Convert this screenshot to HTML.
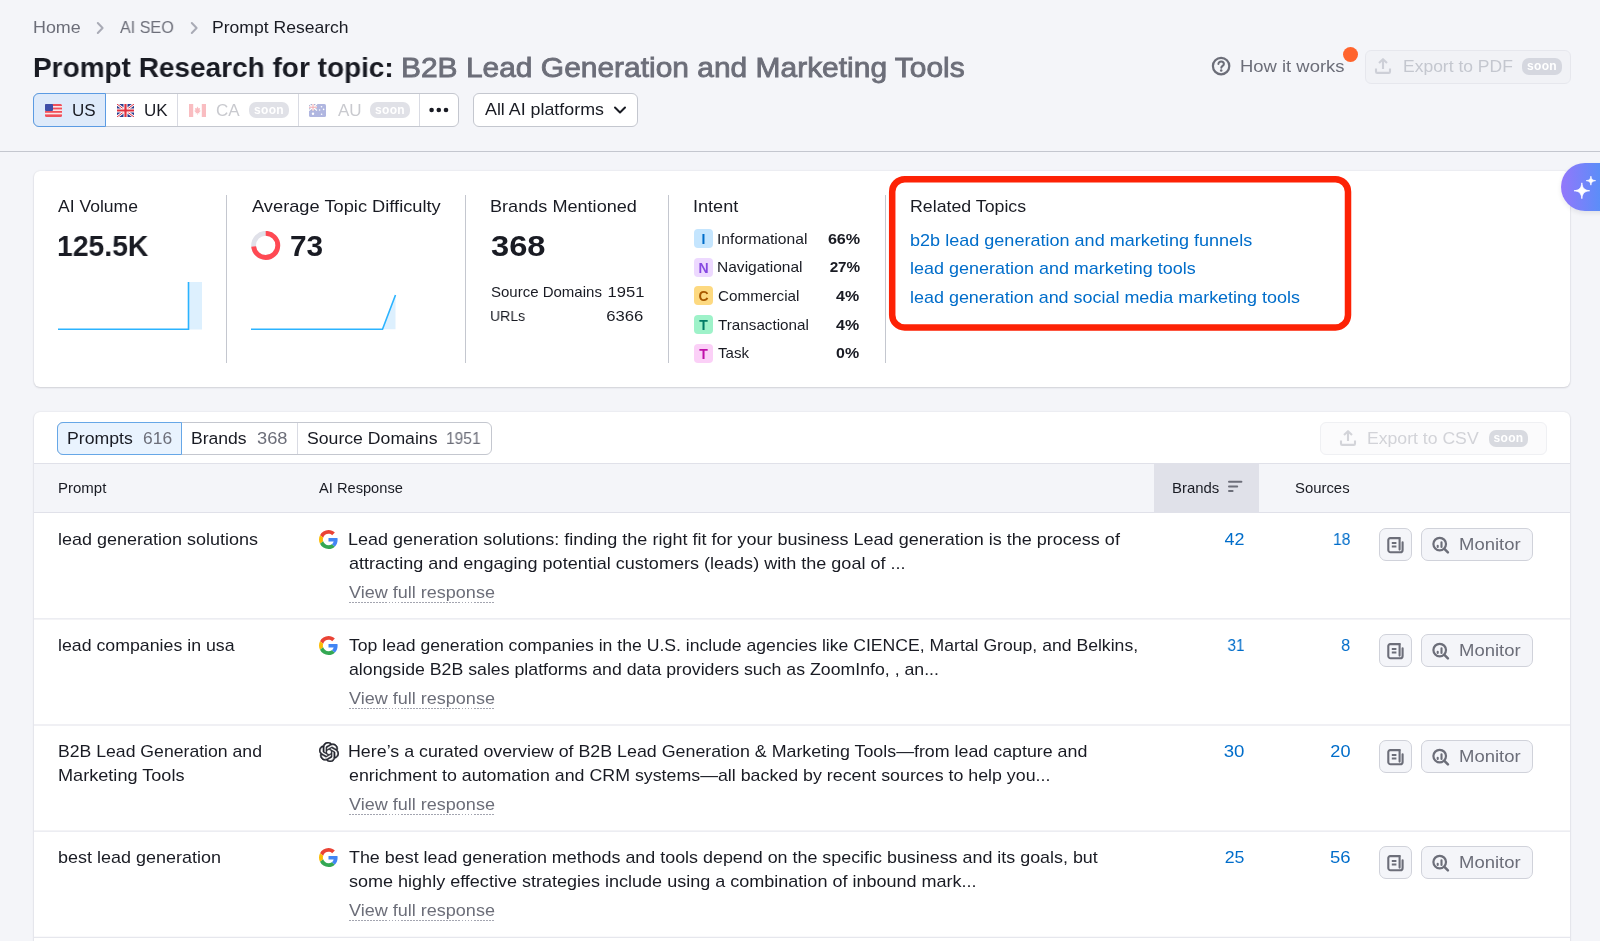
<!DOCTYPE html>
<html lang="en">
<head>
<meta charset="utf-8">
<title>Prompt Research</title>
<style>
*{box-sizing:border-box;margin:0;padding:0}
html,body{width:1600px;height:941px;overflow:hidden}
body{background:#f4f5f9;font-family:"Liberation Sans",sans-serif;color:#191b23;position:relative;font-size:16px}
.abs{position:absolute}
.t{position:absolute;white-space:nowrap;line-height:1;will-change:transform}
a{color:#006dca;text-decoration:none}
/* header */
.crumb{font-size:16.5px;color:#6c6e79}
.title{font-size:28px;font-weight:700;color:#191b23}
.topic{font-size:28px;font-weight:400;color:#6c6e79;-webkit-text-stroke:0.85px #6c6e79}
.hr{position:absolute;left:0;top:151px;width:1600px;height:1px;background:#c4c7cf}
.seg{position:absolute;top:93px;height:34px;background:#fff;border:1px solid #c4c7cf}
.card{position:absolute;left:34px;width:1536px;background:#fff;border-radius:6px;box-shadow:0 0 2px 0 rgba(25,27,35,.11),0 1px 2px 0 rgba(25,27,35,.13)}
.soon{will-change:transform;position:absolute;height:17px;border-radius:7px;background:#dcdde4;color:#fff;font-size:12px;font-weight:700;text-align:center;line-height:17px;letter-spacing:.3px}
.rt{font-size:16.5px}
.vf{color:#6c6e79;padding-bottom:1px;background:repeating-linear-gradient(90deg,#a3a5b0 0,#a3a5b0 1.7px,transparent 1.7px,transparent 2.8px) left bottom/100% 1px no-repeat}
.th{font-size:14.5px}
.btn{position:absolute;height:33px;border:1px solid #d0d2da;border-radius:7px;background:#f4f5f9}
.vline{position:absolute;width:1px;background:#c4c7cf}
</style>
</head>
<body>

<!-- breadcrumbs -->
<span class="t crumb" id="bc1" style="left:33.25px;top:19.00px;font-size:17.00px;transform:scaleX(1.0515);transform-origin:0 0">Home</span>
<svg class="abs" style="left:95px;top:21px" width="10" height="14" viewBox="0 0 10 14"><path d="M2.800 2 L7.600 7 L2.800 12" fill="none" stroke="#a9abb6" stroke-width="2" stroke-linecap="round" stroke-linejoin="round"/></svg>
<span class="t crumb" id="bc2" style="left:119.50px;top:19.00px;font-size:17.00px;transform:scaleX(0.9491);transform-origin:0 0">AI SEO</span>
<svg class="abs" style="left:189px;top:21px" width="10" height="14" viewBox="0 0 10 14"><path d="M2.800 2 L7.600 7 L2.800 12" fill="none" stroke="#a9abb6" stroke-width="2" stroke-linecap="round" stroke-linejoin="round"/></svg>
<span class="t crumb" id="bc3" style="left:212.25px;top:19.00px;color:#191b23;font-size:17.00px;transform:scaleX(1.0327);transform-origin:0 0">Prompt Research</span>

<!-- title -->
<span class="t title" id="ttl" style="left:33.00px;top:53.01px;font-size:28.30px;transform:scaleX(0.9890);transform-origin:0 0">Prompt Research for topic:</span>
<span class="t topic" id="tpc" style="left:400.50px;top:53.01px;font-size:28.30px;transform:scaleX(1.0581);transform-origin:0 0">B2B Lead Generation and Marketing Tools</span>


<!-- country segmented control -->
<div class="seg" style="left:33px;width:426px;border-radius:6px"></div>
<div class="abs" style="left:33px;top:93px;width:73px;height:34px;background:#deeafa;border:1px solid #5b9be3;border-radius:6px 0 0 6px"></div>
<div class="vline" style="left:177px;top:94px;height:32px;background:#d9dbe3"></div>
<div class="vline" style="left:298px;top:94px;height:32px;background:#d9dbe3"></div>
<div class="vline" style="left:419px;top:94px;height:32px;background:#d9dbe3"></div>
<!-- flags -->
<svg class="abs" style="left:45px;top:104px" width="17" height="13" viewBox="0 0 17 13"><rect width="17" height="13" rx="1.5" fill="#f0505a"/><g fill="#fbe4e6"><rect y="2" width="17" height="1.6"/><rect y="5.4" width="17" height="1.6"/><rect y="8.8" width="17" height="1.6"/></g><rect width="8" height="7" rx="1" fill="#3f4fa8"/></svg>
<svg class="abs" style="left:117px;top:104px" width="17" height="13" viewBox="0 0 17 13"><rect width="17" height="13" rx="1.5" fill="#2a3a8c"/><path d="M0 0L17 13M17 0L0 13" stroke="#fff" stroke-width="2.6"/><path d="M0 0L17 13M17 0L0 13" stroke="#e0303f" stroke-width="1"/><path d="M8.5 0V13M0 6.5H17" stroke="#fff" stroke-width="4"/><path d="M8.5 0V13M0 6.5H17" stroke="#e0303f" stroke-width="2.2"/></svg>
<svg class="abs" style="left:189px;top:104px;opacity:.35" width="17" height="13" viewBox="0 0 17 13"><rect width="17" height="13" rx="1.5" fill="#fff"/><rect width="4.2" height="13" fill="#ef4550"/><rect x="12.8" width="4.2" height="13" fill="#ef4550"/><path d="M8.5 2.6l1 2 1.6-.6-.6 2.6 1.4.2-1.8 1.8.3.8-1.6-.3v1.6h-.6V9.1l-1.6.3.3-.8-1.8-1.8 1.4-.2-.6-2.6 1.6.6z" fill="#ef4550"/></svg>
<svg class="abs" style="left:309px;top:104px;opacity:.4" width="17" height="13" viewBox="0 0 17 13"><rect width="17" height="13" rx="1.5" fill="#3b4cb3"/><rect width="8" height="6.5" fill="#2a3a8c"/><path d="M0 0L8 6.5M8 0L0 6.5" stroke="#fff" stroke-width="1.3"/><path d="M4 0V6.5M0 3.25H8" stroke="#fff" stroke-width="2"/><path d="M4 0V6.5M0 3.25H8" stroke="#e0303f" stroke-width="1"/><g fill="#fff"><circle cx="4" cy="9.8" r="1.2"/><circle cx="12.5" cy="2.8" r=".8"/><circle cx="14.6" cy="5.4" r=".8"/><circle cx="10.6" cy="6" r=".8"/><circle cx="12.6" cy="10.2" r=".8"/></g></svg>
<span class="t" id="cUS" style="left:72.00px;top:102.01px;font-size:17.00px;transform:scaleX(1.0000);transform-origin:0 0">US</span>
<span class="t" id="cUK" style="left:144.00px;top:102.01px;font-size:17.00px;transform:scaleX(0.9836);transform-origin:0 0">UK</span>
<span class="t" id="cCA" style="left:216.00px;top:102.01px;color:#c9cacf;font-size:17.00px;transform:scaleX(0.9835);transform-origin:0 0">CA</span>
<span class="t" id="cAU" style="left:338.00px;top:102.01px;color:#c9cacf;font-size:17.00px;transform:scaleX(1.0000);transform-origin:0 0">AU</span>
<div class="soon" style="left:249px;top:102px;width:40px;height:16px;line-height:16px;background:#e0e1e7">soon</div>
<div class="soon" style="left:370px;top:102px;width:40px;height:16px;line-height:16px;background:#e0e1e7">soon</div>
<svg class="abs" style="left:429px;top:107px" width="20" height="6" viewBox="0 0 20 6"><circle cx="2.6" cy="3" r="2.3" fill="#191b23"/><circle cx="9.8" cy="3" r="2.3" fill="#191b23"/><circle cx="17" cy="3" r="2.3" fill="#191b23"/></svg>
<!-- platform select -->
<div class="seg" style="left:473px;width:165px;border-radius:6px"></div>
<span class="t" id="plat" style="left:484.50px;top:101.01px;font-size:17.00px;transform:scaleX(1.0487);transform-origin:0 0">All AI platforms</span>
<svg class="abs" style="left:613px;top:105px" width="14" height="10" viewBox="0 0 14 10"><path d="M2 2.5 L7 7.5 L12 2.5" fill="none" stroke="#191b23" stroke-width="2" stroke-linecap="round" stroke-linejoin="round"/></svg>

<!-- how it works -->
<svg class="abs" style="left:1211px;top:56px" width="20" height="20" viewBox="0 0 20 20"><circle cx="10.100" cy="10.100" r="8.200" fill="none" stroke="#6c6e79" stroke-width="2.200"/><path d="M7.400 8.100c0-1.600 1.200-2.700 2.800-2.700s2.700 1.100 2.700 2.500c0 1.900-2.600 2-2.600 3.900" fill="none" stroke="#6c6e79" stroke-width="2" stroke-linecap="round"/><circle cx="10.200" cy="14.500" r="1.250" fill="#6c6e79"/></svg>
<span class="t" id="hiw" style="left:1240.3px;top:58.00px;color:#6c6e79;transform:scaleX(1.084);transform-origin:0 0;font-size:17.00px">How it works</span>
<div class="abs" style="left:1343px;top:47px;width:15px;height:15px;border-radius:8px;background:#ff642d"></div>
<!-- export pdf -->
<div class="abs" style="left:1365px;top:50px;width:206px;height:34px;border:1px solid #e6e7ed;border-radius:6px;background:#f1f2f6"></div>
<svg class="abs" style="left:1374px;top:57px" width="18" height="18" viewBox="0 0 18 18"><path d="M9 12V2.5M5 6L9 2.2 13 6M2 11.5v3.2c0 .7.5 1.2 1.2 1.2h11.6c.7 0 1.2-.5 1.2-1.2v-3.2" fill="none" stroke="#cdcfd7" stroke-width="2.1" stroke-linecap="butt" stroke-linejoin="round"/></svg>
<span class="t" id="pdf" style="left:1402.50px;top:58.00px;color:#c4c7cf;font-size:17.00px;transform:scaleX(1.0286);transform-origin:0 0">Export to PDF</span>
<div class="soon" style="left:1522px;top:58px;width:40px;background:#d5d7df">soon</div>

<div class="hr"></div>

<!-- summary card -->
<div class="card" style="top:171px;height:216px"></div>
<span class="t" id="h1" style="left:58.00px;top:198.00px;font-size:17.00px;transform:scaleX(1.0325);transform-origin:0 0">AI Volume</span>
<span class="t" id="v1" style="left:57.00px;top:231.01px;font-weight:700;font-size:29.50px;transform:scaleX(0.9604);transform-origin:0 0">125.5K</span>
<svg class="abs" style="left:58px;top:280px" width="145" height="52" viewBox="0 0 145 52"><rect x="130.5" y="2" width="13.5" height="47.5" fill="#ddf0fe"/><path d="M0 49.2H130.5V2" fill="none" stroke="#2bb3ff" stroke-width="1.6"/></svg>
<div class="vline" style="left:226px;top:195px;height:168px"></div>

<span class="t" id="h2" style="left:252.00px;top:198.00px;font-size:17.00px;transform:scaleX(1.0739);transform-origin:0 0">Average Topic Difficulty</span>
<svg class="abs" style="left:251px;top:231px" width="30" height="29" viewBox="0 0 30 29"><circle cx="14.7" cy="14.4" r="12.1" fill="none" stroke="#e0e1e9" stroke-width="4.8"/><circle cx="14.7" cy="14.4" r="12.1" fill="none" stroke="#ff4953" stroke-width="4.8" stroke-dasharray="55.5 76.03" transform="rotate(-90 14.7 14.4)"/></svg>
<span class="t" id="v2" style="left:289.75px;top:231.01px;font-weight:700;font-size:29.50px;transform:scaleX(1.0101);transform-origin:0 0">73</span>
<svg class="abs" style="left:251px;top:280px" width="146" height="52" viewBox="0 0 146 52"><path d="M131.5 49.2L144.5 15V49.2Z" fill="#ddf0fe"/><path d="M0 49.2H131.5L144.5 15" fill="none" stroke="#2bb3ff" stroke-width="1.6"/></svg>
<div class="vline" style="left:465px;top:195px;height:168px"></div>

<span class="t" id="h3" style="left:490.00px;top:198.00px;font-size:17.00px;transform:scaleX(1.0647);transform-origin:0 0">Brands Mentioned</span>
<span class="t" id="v3" style="left:491.00px;top:231.01px;font-weight:700;font-size:29.50px;transform:scaleX(1.1071);transform-origin:0 0">368</span>
<span class="t" id="sd" style="left:491.00px;top:284.01px;font-size:15.00px;transform:scaleX(0.9982);transform-origin:0 0">Source Domains</span>
<span class="t" id="sdv" style="right:956.08px;top:284.01px;font-size:15.00px;transform:scaleX(1.1033);transform-origin:100% 0">1951</span>
<span class="t" id="ur" style="left:490.00px;top:308.01px;font-size:15.00px;transform:scaleX(0.9353);transform-origin:0 0">URLs</span>
<span class="t" id="urv" style="right:956.41px;top:308.01px;font-size:15.00px;transform:scaleX(1.1118);transform-origin:100% 0">6366</span>
<div class="vline" style="left:668px;top:195px;height:168px"></div>

<span class="t" id="h4" style="left:693.00px;top:198.00px;font-size:17.00px;transform:scaleX(1.0628);transform-origin:0 0">Intent</span>
<div class="abs" style="left:694px;top:228.8px;width:19px;height:19px;border-radius:4px;background:#c4e5fe;color:#006dca;font-size:14px;font-weight:700;text-align:center;line-height:21px;will-change:transform">I</div>
<span class="t" id="in0" style="left:717.30px;top:232.00px;font-size:14.60px;transform:scaleX(1.0718);transform-origin:0 0">Informational</span>
<span class="t" id="ip0" style="right:740.10px;top:232.00px;font-weight:700;font-size:14.60px;transform:scaleX(1.1064);transform-origin:100% 0">66%</span>
<div class="abs" style="left:694px;top:257.6px;width:19px;height:19px;border-radius:4px;background:#edd9ff;color:#8649e1;font-size:14px;font-weight:700;text-align:center;line-height:21px;will-change:transform">N</div>
<span class="t" id="in1" style="left:717.30px;top:260.01px;font-size:14.60px;transform:scaleX(1.0648);transform-origin:0 0">Navigational</span>
<span class="t" id="ip1" style="right:740.10px;top:260.01px;font-weight:700;font-size:14.60px;transform:scaleX(1.0470);transform-origin:100% 0">27%</span>
<div class="abs" style="left:694px;top:286.4px;width:19px;height:19px;border-radius:4px;background:#fdd980;color:#a75800;font-size:14px;font-weight:700;text-align:center;line-height:21px;will-change:transform">C</div>
<span class="t" id="in2" style="left:718.30px;top:289.00px;font-size:14.60px;transform:scaleX(1.0460);transform-origin:0 0">Commercial</span>
<span class="t" id="ip2" style="right:740.60px;top:289.00px;font-weight:700;font-size:14.60px;transform:scaleX(1.0952);transform-origin:100% 0">4%</span>
<div class="abs" style="left:694px;top:315.2px;width:19px;height:19px;border-radius:4px;background:#9ef2c9;color:#007c65;font-size:14px;font-weight:700;text-align:center;line-height:21px;will-change:transform">T</div>
<span class="t" id="in3" style="left:718.30px;top:318.00px;font-size:14.60px;transform:scaleX(1.0439);transform-origin:0 0">Transactional</span>
<span class="t" id="ip3" style="right:740.60px;top:318.00px;font-weight:700;font-size:14.60px;transform:scaleX(1.0952);transform-origin:100% 0">4%</span>
<div class="abs" style="left:694px;top:344.0px;width:19px;height:19px;border-radius:4px;background:#fbd0f7;color:#c010a9;font-size:14px;font-weight:700;text-align:center;line-height:21px;will-change:transform">T</div>
<span class="t" id="in4" style="left:718.30px;top:346.01px;font-size:14.60px;transform:scaleX(1.0333);transform-origin:0 0">Task</span>
<span class="t" id="ip4" style="right:740.60px;top:346.01px;font-weight:700;font-size:14.60px;transform:scaleX(1.0952);transform-origin:100% 0">0%</span>

<div class="vline" style="left:885px;top:195px;height:168px"></div>

<svg class="abs" style="left:885px;top:172px" width="472" height="164" viewBox="0 0 472 164"><rect x="7.200" y="7.250" width="455.800" height="148.200" rx="12.500" ry="12.500" fill="none" stroke="#fd2205" stroke-width="6.500"/></svg>
<span class="t" id="h5" style="left:910.20px;top:198.00px;font-size:17.00px;transform:scaleX(1.0438);transform-origin:0 0">Related Topics</span>
<a class="t" id="r1" style="left:909.60px;top:232.00px;font-size:17.00px;transform:scaleX(1.0617);transform-origin:0 0">b2b lead generation and marketing funnels</a>
<a class="t" id="r2" style="left:909.60px;top:260.00px;font-size:17.00px;transform:scaleX(1.0571);transform-origin:0 0">lead generation and marketing tools</a>
<a class="t" id="r3" style="left:909.60px;top:289.00px;font-size:17.00px;transform:scaleX(1.0552);transform-origin:0 0">lead generation and social media marketing tools</a>

<!-- AI fab -->
<div class="abs" style="left:1561px;top:163px;width:90px;height:48px;border-radius:24px;background:linear-gradient(90deg,#9377fb 0px,#5a8ef8 40px);box-shadow:0 2px 5px rgba(25,27,35,.09)"></div>
<svg class="abs" style="left:1561px;top:163px" width="39" height="48" viewBox="0 0 39 48"><path d="M20.85 19.85C21.47 25.38 23.19 27.12 28.65 27.75C23.19 28.38 21.47 30.12 20.85 35.65C20.23 30.12 18.51 28.38 13.05 27.75C18.51 27.12 20.23 25.38 20.85 19.85Z" fill="#fff" stroke="#fff" stroke-width=".8" stroke-linejoin="round"/><path d="M29.90 13.15C30.28 16.30 31.31 17.29 34.60 17.65C31.31 18.01 30.28 19.00 29.90 22.15C29.52 19.00 28.49 18.01 25.20 17.65C28.49 17.29 29.52 16.30 29.90 13.15Z" fill="#fff" stroke="#fff" stroke-width=".7" stroke-linejoin="round"/></svg>

<!-- table card -->
<div class="card" style="top:412px;height:540px;border-radius:6px 6px 0 0"></div>
<div class="abs" style="left:57px;top:422px;width:435px;height:33px;border:1px solid #c4c7cf;border-radius:6px;background:#fff"></div>
<div class="abs" style="left:57px;top:422px;width:125px;height:33px;border:1px solid #66a7e7;border-radius:6px 0 0 6px;background:#e9f3fe"></div>
<div class="vline" style="left:297px;top:423px;height:31px;background:#d9dbe3"></div>
<span class="t" id="t1" style="left:67.20px;top:430.01px;font-size:16.30px;transform:scaleX(1.0859);transform-origin:0 0">Prompts</span>
<span class="t" id="t1n" style="left:143.00px;top:430.01px;color:#6c6e79;font-size:16.30px;transform:scaleX(1.0701);transform-origin:0 0">616</span>
<span class="t" id="t2" style="left:190.80px;top:430.01px;font-size:16.30px;transform:scaleX(1.0788);transform-origin:0 0">Brands</span>
<span class="t" id="t2n" style="left:256.50px;top:430.01px;color:#6c6e79;font-size:16.30px;transform:scaleX(1.1221);transform-origin:0 0">368</span>
<span class="t" id="t3" style="left:306.50px;top:430.01px;font-size:16.30px;transform:scaleX(1.0843);transform-origin:0 0">Source Domains</span>
<span class="t" id="t3n" style="left:446.40px;top:430.01px;color:#6c6e79;font-size:16.30px;transform:scaleX(0.9556);transform-origin:0 0">1951</span>

<div class="abs" style="left:1320px;top:422px;width:227px;height:33px;border:1px solid #eff0f3;border-radius:6px;background:#fbfbfc"></div>
<svg class="abs" style="left:1339px;top:429px" width="18" height="18" viewBox="0 0 18 18"><path d="M9 12V2.500M5 6L9 2.200 13 6M2 11.500v3.200c0 .700.500 1.200 1.200 1.200h11.600c.700 0 1.200-.500 1.200-1.200v-3.200" fill="none" stroke="#d3d4d9" stroke-width="2.1" stroke-linecap="butt" stroke-linejoin="round"/></svg>
<span class="t" id="csv" style="left:1366.60px;top:430.01px;color:#d2d3d8;font-size:16.30px;transform:scaleX(1.0821);transform-origin:0 0">Export to CSV</span>
<div class="soon" style="left:1489px;top:429.5px;width:39px;background:#d8dae0">soon</div>

<!-- table head -->
<div class="abs" style="left:34px;top:463px;width:1536px;height:50px;background:#f4f5f9;border-top:1px solid #e0e1e9;border-bottom:1px solid #e0e1e9"></div>
<div class="abs" style="left:1154px;top:464px;width:105px;height:49px;background:#e0e1e9"></div>
<span class="t th" id="th1" style="left:57.50px;top:481.01px;font-size:14.30px;transform:scaleX(1.0489);transform-origin:0 0">Prompt</span>
<span class="t th" id="th2" style="left:319.00px;top:481.01px;font-size:14.30px;transform:scaleX(1.0244);transform-origin:0 0">AI Response</span>
<span class="t th" id="th3" style="left:1172.20px;top:481.01px;font-size:14.30px;transform:scaleX(1.0444);transform-origin:0 0">Brands</span>
<svg class="abs" style="left:1228px;top:480px" width="15" height="13" viewBox="0 0 15 13"><path d="M1 1.700h12.400M1 6.400h8.200M1 11.100h3.600" stroke="#6c6e79" stroke-width="2" stroke-linecap="round"/></svg>
<span class="t th" id="th4" style="left:1294.90px;top:481.01px;font-size:14.30px;transform:scaleX(1.0406);transform-origin:0 0">Sources</span>
<!-- row 1 -->
<span class="t rt" id="p0a" style="left:57.50px;top:532.01px;font-size:16.60px;transform:scaleX(1.0844);transform-origin:0 0">lead generation solutions</span>
<svg class="abs" style="left:318.700px;top:530.3px" width="19" height="19" viewBox="0 0 48 48"><path fill="#EA4335" d="M24 9.5c3.54 0 6.71 1.220 9.210 3.600l6.850-6.850C35.900 2.380 30.470 0 24 0 14.620 0 6.510 5.380 2.560 13.220l7.980 6.190C12.430 13.720 17.740 9.500 24 9.500z"/><path fill="#4285F4" d="M46.980 24.550c0-1.570-.150-3.090-.380-4.550H24v9.020h12.940c-.580 2.960-2.260 5.480-4.780 7.180l7.730 6c4.510-4.180 7.090-10.360 7.090-17.650z"/><path fill="#FBBC05" d="M10.530 28.590c-.480-1.450-.760-2.990-.760-4.590s.270-3.140.760-4.590l-7.980-6.190C.920 16.460 0 20.120 0 24c0 3.880.920 7.540 2.560 10.780l7.970-6.190z"/><path fill="#34A853" d="M24 48c6.480 0 11.930-2.130 15.890-5.810l-7.730-6c-2.150 1.450-4.920 2.300-8.160 2.300-6.260 0-11.570-4.220-13.470-9.910l-7.980 6.190C6.510 42.620 14.620 48 24 48z"/></svg>
<span class="t rt" id="a0a" style="left:347.50px;top:532.01px;font-size:16.60px;transform:scaleX(1.0853);transform-origin:0 0">Lead generation solutions: finding the right fit for your business Lead generation is the process of</span>
<span class="t rt" id="a0b" style="left:348.50px;top:556.01px;font-size:16.60px;transform:scaleX(1.0871);transform-origin:0 0">attracting and engaging potential customers (leads) with the goal of ...</span>
<span class="t rt vf" id="vf0" style="left:348.50px;top:585.01px;font-size:16.60px;transform:scaleX(1.0860);transform-origin:0 0">View full response</span>
<a class="t rt" id="b0" style="right:355.40px;top:532.01px;font-size:16.60px;transform:scaleX(1.0796);transform-origin:100% 0">42</a>
<a class="t rt" id="s0" style="right:249.80px;top:532.01px;font-size:16.60px;transform:scaleX(0.9490);transform-origin:100% 0">18</a>
<div class="btn" style="left:1379px;top:528px;width:33px"></div>
<svg class="abs" style="left:1386px;top:535.5px" width="19" height="19" viewBox="0 0 19 19"><path d="M13.6 2.1H4.200A1.900 1.900 0 0 0 2.300 4V14a2.300 2.300 0 0 0 2.300 2.300H14.200a2.400 2.400 0 0 0 2.400-2.400V6.300" fill="none" stroke="#6c6e79" stroke-width="2.1" stroke-linecap="round" stroke-linejoin="round"/><path d="M13.6 2.100V13.600" fill="none" stroke="#6c6e79" stroke-width="2.1" stroke-linecap="round"/><path d="M5.800 7.100h4.600M5.800 10.600h4.600" stroke="#6c6e79" stroke-width="2" stroke-linecap="butt"/></svg>
<div class="btn" style="left:1421px;top:528px;width:112px"></div>
<svg class="abs" style="left:1431px;top:535.5px" width="19" height="19" viewBox="0 0 19 19"><circle cx="8.700" cy="8.100" r="6.300" fill="none" stroke="#6c6e79" stroke-width="2.200"/><path d="M13.400 12.900L16.900 16.400" stroke="#6c6e79" stroke-width="2.500" stroke-linecap="round"/><path d="M6.700 9.700v1.300M10.500 6.300v4.700" stroke="#6c6e79" stroke-width="2.100" stroke-linecap="round"/></svg>
<span class="t" id="m0" style="left:1458.90px;top:536.00px;color:#6c6e79;font-size:17.00px;transform:scaleX(1.0866);transform-origin:0 0">Monitor</span>
<div class="abs" style="left:34px;top:618px;width:1536px;height:2px;background:linear-gradient(180deg,#ecedf2 0,#ecedf2 1px,#f3f3f6 1px,#f3f3f6 2px)"></div>
<!-- row 2 -->
<span class="t rt" id="p1a" style="left:57.50px;top:638.01px;font-size:16.60px;transform:scaleX(1.0693);transform-origin:0 0">lead companies in usa</span>
<svg class="abs" style="left:318.700px;top:636.3px" width="19" height="19" viewBox="0 0 48 48"><path fill="#EA4335" d="M24 9.5c3.54 0 6.71 1.220 9.210 3.600l6.850-6.850C35.900 2.380 30.470 0 24 0 14.620 0 6.510 5.380 2.560 13.220l7.980 6.190C12.430 13.720 17.740 9.500 24 9.500z"/><path fill="#4285F4" d="M46.980 24.550c0-1.570-.150-3.090-.380-4.550H24v9.020h12.940c-.580 2.960-2.260 5.480-4.780 7.180l7.730 6c4.510-4.180 7.090-10.360 7.090-17.650z"/><path fill="#FBBC05" d="M10.530 28.590c-.480-1.450-.760-2.990-.760-4.590s.270-3.140.760-4.590l-7.980-6.190C.920 16.460 0 20.120 0 24c0 3.880.920 7.540 2.560 10.780l7.970-6.190z"/><path fill="#34A853" d="M24 48c6.480 0 11.930-2.130 15.890-5.810l-7.730-6c-2.150 1.450-4.920 2.300-8.160 2.300-6.260 0-11.570-4.220-13.470-9.910l-7.980 6.190C6.510 42.620 14.620 48 24 48z"/></svg>
<span class="t rt" id="a1a" style="left:348.50px;top:638.01px;font-size:16.60px;transform:scaleX(1.0614);transform-origin:0 0">Top lead generation companies in the U.S. include agencies like CIENCE, Martal Group, and Belkins,</span>
<span class="t rt" id="a1b" style="left:348.50px;top:662.01px;font-size:16.60px;transform:scaleX(1.0678);transform-origin:0 0">alongside B2B sales platforms and data providers such as ZoomInfo, , an...</span>
<span class="t rt vf" id="vf1" style="left:348.50px;top:691.01px;font-size:16.60px;transform:scaleX(1.0860);transform-origin:0 0">View full response</span>
<a class="t rt" id="b1" style="right:355.20px;top:638.01px;font-size:16.60px;transform:scaleX(0.9200);transform-origin:100% 0">31</a>
<a class="t rt" id="s1" style="right:249.80px;top:638.01px;font-size:16.60px;transform:scaleX(0.9911);transform-origin:100% 0">8</a>
<div class="btn" style="left:1379px;top:634px;width:33px"></div>
<svg class="abs" style="left:1386px;top:641.5px" width="19" height="19" viewBox="0 0 19 19"><path d="M13.6 2.1H4.200A1.900 1.900 0 0 0 2.300 4V14a2.300 2.300 0 0 0 2.300 2.300H14.200a2.400 2.400 0 0 0 2.400-2.400V6.300" fill="none" stroke="#6c6e79" stroke-width="2.1" stroke-linecap="round" stroke-linejoin="round"/><path d="M13.6 2.100V13.600" fill="none" stroke="#6c6e79" stroke-width="2.1" stroke-linecap="round"/><path d="M5.800 7.100h4.600M5.800 10.600h4.600" stroke="#6c6e79" stroke-width="2" stroke-linecap="butt"/></svg>
<div class="btn" style="left:1421px;top:634px;width:112px"></div>
<svg class="abs" style="left:1431px;top:641.5px" width="19" height="19" viewBox="0 0 19 19"><circle cx="8.700" cy="8.100" r="6.300" fill="none" stroke="#6c6e79" stroke-width="2.200"/><path d="M13.400 12.900L16.900 16.400" stroke="#6c6e79" stroke-width="2.500" stroke-linecap="round"/><path d="M6.700 9.700v1.300M10.500 6.300v4.700" stroke="#6c6e79" stroke-width="2.100" stroke-linecap="round"/></svg>
<span class="t" id="m1" style="left:1458.90px;top:642.00px;color:#6c6e79;font-size:17.00px;transform:scaleX(1.0866);transform-origin:0 0">Monitor</span>
<div class="abs" style="left:34px;top:724px;width:1536px;height:2px;background:linear-gradient(180deg,#f0f0f4 0,#f0f0f4 1px,#f0f0f4 1px,#f0f0f4 2px)"></div>
<!-- row 3 -->
<span class="t rt" id="p2a" style="left:57.50px;top:744.01px;font-size:16.60px;transform:scaleX(1.0628);transform-origin:0 0">B2B Lead Generation and</span>
<span class="t rt" id="p2b" style="left:57.50px;top:768.01px;font-size:16.60px;transform:scaleX(1.0915);transform-origin:0 0">Marketing Tools</span>
<svg class="abs" style="left:318.700px;top:742.3px" width="20" height="20" viewBox="0 0 24 24"><path fill="#23252e" stroke="#23252e" stroke-width=".55" d="M22.282 9.821a5.985 5.985 0 0 0-.516-4.910 6.046 6.046 0 0 0-6.510-2.900A6.065 6.065 0 0 0 4.981 4.180a5.985 5.985 0 0 0-3.998 2.900 6.046 6.046 0 0 0 .743 7.097 5.980 5.980 0 0 0 .510 4.911 6.051 6.051 0 0 0 6.515 2.900A5.985 5.985 0 0 0 13.260 24a6.056 6.056 0 0 0 5.772-4.206 5.990 5.990 0 0 0 3.997-2.900 6.056 6.056 0 0 0-.747-7.073zM13.260 22.430a4.476 4.476 0 0 1-2.876-1.040l.141-.081 4.779-2.758a.795.795 0 0 0 .392-.681v-6.737l2.020 1.168a.071.071 0 0 1 .038.052v5.583a4.504 4.504 0 0 1-4.494 4.494zM3.600 18.304a4.470 4.470 0 0 1-.535-3.014l.142.085 4.783 2.759a.771.771 0 0 0 .780 0l5.843-3.369v2.332a.080.080 0 0 1-.033.062L9.740 19.950a4.500 4.500 0 0 1-6.140-1.646zM2.340 7.896a4.485 4.485 0 0 1 2.366-1.973V11.600a.766.766 0 0 0 .388.676l5.815 3.355-2.020 1.168a.076.076 0 0 1-.071 0l-4.830-2.786A4.504 4.504 0 0 1 2.340 7.872zm16.597 3.855l-5.833-3.387L15.119 7.200a.076.076 0 0 1 .071 0l4.830 2.791a4.494 4.494 0 0 1-.676 8.105v-5.678a.790.790 0 0 0-.407-.667zm2.010-3.023l-.141-.085-4.774-2.782a.776.776 0 0 0-.785 0L9.409 9.230V6.897a.066.066 0 0 1 .028-.061l4.830-2.787a4.500 4.500 0 0 1 6.680 4.660zm-12.640 4.135l-2.020-1.164a.080.080 0 0 1-.038-.057V6.075a4.500 4.500 0 0 1 7.375-3.453l-.142.080L8.704 5.460a.795.795 0 0 0-.393.681zm1.097-2.365l2.602-1.500 2.607 1.500v2.999l-2.597 1.500-2.607-1.500z"/></svg>
<span class="t rt" id="a2a" style="left:347.50px;top:744.01px;font-size:16.60px;transform:scaleX(1.0740);transform-origin:0 0">Here’s a curated overview of B2B Lead Generation &amp; Marketing Tools—from lead capture and</span>
<span class="t rt" id="a2b" style="left:348.50px;top:768.01px;font-size:16.60px;transform:scaleX(1.0726);transform-origin:0 0">enrichment to automation and CRM systems—all backed by recent sources to help you...</span>
<span class="t rt vf" id="vf2" style="left:348.50px;top:797.01px;font-size:16.60px;transform:scaleX(1.0860);transform-origin:0 0">View full response</span>
<a class="t rt" id="b2" style="right:355.40px;top:744.01px;font-size:16.60px;transform:scaleX(1.1237);transform-origin:100% 0">30</a>
<a class="t rt" id="s2" style="right:250.00px;top:744.01px;font-size:16.60px;transform:scaleX(1.0912);transform-origin:100% 0">20</a>
<div class="btn" style="left:1379px;top:740px;width:33px"></div>
<svg class="abs" style="left:1386px;top:747.5px" width="19" height="19" viewBox="0 0 19 19"><path d="M13.6 2.1H4.200A1.900 1.900 0 0 0 2.300 4V14a2.300 2.300 0 0 0 2.300 2.300H14.200a2.400 2.400 0 0 0 2.400-2.400V6.300" fill="none" stroke="#6c6e79" stroke-width="2.1" stroke-linecap="round" stroke-linejoin="round"/><path d="M13.6 2.100V13.600" fill="none" stroke="#6c6e79" stroke-width="2.1" stroke-linecap="round"/><path d="M5.800 7.100h4.600M5.800 10.600h4.600" stroke="#6c6e79" stroke-width="2" stroke-linecap="butt"/></svg>
<div class="btn" style="left:1421px;top:740px;width:112px"></div>
<svg class="abs" style="left:1431px;top:747.5px" width="19" height="19" viewBox="0 0 19 19"><circle cx="8.700" cy="8.100" r="6.300" fill="none" stroke="#6c6e79" stroke-width="2.200"/><path d="M13.400 12.900L16.900 16.400" stroke="#6c6e79" stroke-width="2.500" stroke-linecap="round"/><path d="M6.700 9.700v1.300M10.500 6.300v4.700" stroke="#6c6e79" stroke-width="2.100" stroke-linecap="round"/></svg>
<span class="t" id="m2" style="left:1458.90px;top:748.00px;color:#6c6e79;font-size:17.00px;transform:scaleX(1.0866);transform-origin:0 0">Monitor</span>
<div class="abs" style="left:34px;top:830px;width:1536px;height:2px;background:linear-gradient(180deg,#f3f3f6 0,#f3f3f6 1px,#ecedf2 1px,#ecedf2 2px)"></div>
<!-- row 4 -->
<span class="t rt" id="p3a" style="left:57.50px;top:850.01px;font-size:16.60px;transform:scaleX(1.0833);transform-origin:0 0">best lead generation</span>
<svg class="abs" style="left:318.700px;top:848.3px" width="19" height="19" viewBox="0 0 48 48"><path fill="#EA4335" d="M24 9.5c3.54 0 6.71 1.220 9.210 3.600l6.850-6.850C35.900 2.380 30.470 0 24 0 14.620 0 6.510 5.380 2.560 13.220l7.980 6.190C12.430 13.720 17.740 9.500 24 9.500z"/><path fill="#4285F4" d="M46.980 24.550c0-1.570-.150-3.090-.380-4.550H24v9.020h12.940c-.580 2.960-2.260 5.480-4.780 7.180l7.730 6c4.510-4.180 7.090-10.360 7.090-17.650z"/><path fill="#FBBC05" d="M10.530 28.590c-.480-1.450-.760-2.990-.760-4.590s.270-3.140.760-4.590l-7.980-6.190C.920 16.460 0 20.120 0 24c0 3.880.920 7.540 2.560 10.780l7.970-6.190z"/><path fill="#34A853" d="M24 48c6.480 0 11.930-2.130 15.890-5.810l-7.730-6c-2.150 1.450-4.920 2.300-8.160 2.300-6.260 0-11.570-4.220-13.470-9.910l-7.980 6.190C6.510 42.620 14.620 48 24 48z"/></svg>
<span class="t rt" id="a3a" style="left:348.50px;top:850.01px;font-size:16.60px;transform:scaleX(1.0779);transform-origin:0 0">The best lead generation methods and tools depend on the specific business and its goals, but</span>
<span class="t rt" id="a3b" style="left:348.50px;top:874.01px;font-size:16.60px;transform:scaleX(1.0858);transform-origin:0 0">some highly effective strategies include using a combination of inbound mark...</span>
<span class="t rt vf" id="vf3" style="left:348.50px;top:903.01px;font-size:16.60px;transform:scaleX(1.0860);transform-origin:0 0">View full response</span>
<a class="t rt" id="b3" style="right:355.40px;top:850.01px;font-size:16.60px;transform:scaleX(1.0689);transform-origin:100% 0">25</a>
<a class="t rt" id="s3" style="right:250.00px;top:850.01px;font-size:16.60px;transform:scaleX(1.1142);transform-origin:100% 0">56</a>
<div class="btn" style="left:1379px;top:846px;width:33px"></div>
<svg class="abs" style="left:1386px;top:853.5px" width="19" height="19" viewBox="0 0 19 19"><path d="M13.6 2.1H4.200A1.900 1.900 0 0 0 2.300 4V14a2.300 2.300 0 0 0 2.300 2.300H14.200a2.400 2.400 0 0 0 2.400-2.400V6.300" fill="none" stroke="#6c6e79" stroke-width="2.1" stroke-linecap="round" stroke-linejoin="round"/><path d="M13.6 2.100V13.600" fill="none" stroke="#6c6e79" stroke-width="2.1" stroke-linecap="round"/><path d="M5.800 7.100h4.600M5.800 10.600h4.600" stroke="#6c6e79" stroke-width="2" stroke-linecap="butt"/></svg>
<div class="btn" style="left:1421px;top:846px;width:112px"></div>
<svg class="abs" style="left:1431px;top:853.5px" width="19" height="19" viewBox="0 0 19 19"><circle cx="8.700" cy="8.100" r="6.300" fill="none" stroke="#6c6e79" stroke-width="2.200"/><path d="M13.400 12.900L16.900 16.400" stroke="#6c6e79" stroke-width="2.500" stroke-linecap="round"/><path d="M6.700 9.700v1.300M10.500 6.300v4.700" stroke="#6c6e79" stroke-width="2.100" stroke-linecap="round"/></svg>
<span class="t" id="m3" style="left:1458.90px;top:854.00px;color:#6c6e79;font-size:17.00px;transform:scaleX(1.0866);transform-origin:0 0">Monitor</span>
<div class="abs" style="left:34px;top:936px;width:1536px;height:2px;background:linear-gradient(180deg,#f9f9fb 0,#f9f9fb 1px,#e6e7ed 1px,#e6e7ed 2px)"></div>


</body>
</html>
